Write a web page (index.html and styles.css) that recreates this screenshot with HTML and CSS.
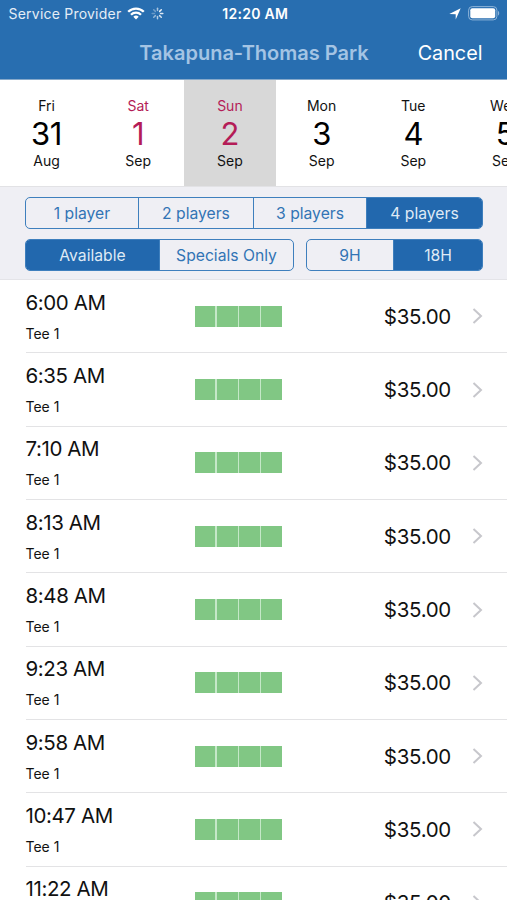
FILE: index.html
```html
<!DOCTYPE html>
<html lang="en">
<head>
<meta charset="utf-8">
<title>Tee times</title>
<link rel="stylesheet" href="styles.css">
</head>
<body>
<header class="top">
  <div class="status">
    <div class="status-left">
      <span class="carrier">Service Provider</span>
      <svg class="wifi" width="18" height="13" viewBox="0 0 18 13" fill="none" stroke="#fff" stroke-width="2.3"><path d="M1.2 4.8a11 11 0 0 1 15.6 0M4 7.8a7 7 0 0 1 10 0"/><path d="M6.3 9.7a3.9 3.9 0 0 1 5.400 0L9 12.500z" fill="#fff" stroke="none"/></svg>
      <svg class="spinner" width="13" height="13" viewBox="-6.5 -6.5 13 13" stroke="#fff" stroke-width="1.5" stroke-linecap="round"><path d="M0-3V-5.3" opacity=".6"/><path d="M2.1-2.1 3.800-3.800" opacity=".9"/><path d="M3 0H5.300" opacity=".85"/><path d="M2.100 2.100 3.800 3.800" opacity=".8"/><path d="M0 3V5.300" opacity=".65"/><path d="M-2.100 2.100-3.800 3.800" opacity=".5"/><path d="M-3 0H-5.300" opacity=".3"/><path d="M-2.100-2.100-3.800-3.800" opacity=".35"/></svg>
    </div>
    <span class="clock">12:20 AM</span>
    <div class="status-right">
      <svg width="12" height="12" viewBox="0 0 12 12"><path d="M11.700.3 6.700 11.600V6.200L.3 6z" fill="#fff"/></svg>
      <svg width="32" height="15" viewBox="0 0 32 15"><rect x=".6" y=".6" width="28.300" height="13.300" rx="3.600" fill="none" stroke="#8db3d8" stroke-width="1"/><rect x="2.300" y="2.300" width="24.900" height="9.900" rx="2" fill="#fff"/><path d="M30 5v4.500c1.600-.6 1.600-3.900 0-4.500" fill="#8db3d8"/></svg>
    </div>
  </div>
  <div class="nav"><span></span><h1>Takapuna-Thomas Park</h1><a class="cancel">Cancel</a></div>
</header>
<div class="days">
  <div class="day"><span>Fri</span><b>31</b><span>Aug</span></div>
  <div class="day weekend"><span>Sat</span><b>1</b><span>Sep</span></div>
  <div class="day weekend selected"><span>Sun</span><b>2</b><span>Sep</span></div>
  <div class="day"><span>Mon</span><b>3</b><span>Sep</span></div>
  <div class="day"><span>Tue</span><b>4</b><span>Sep</span></div>
  <div class="day"><span>Wed</span><b>5</b><span>Sep</span></div>
</div>
<div class="filters">
  <div class="segments players"><span>1 player</span><span>2 players</span><span>3 players</span><span class="on">4 players</span></div>
  <div class="filter-row">
    <div class="segments kind"><span class="on">Available</span><span>Specials Only</span></div>
    <div class="segments holes"><span>9H</span><span class="on">18H</span></div>
  </div>
</div>
<main class="list" id="list"></main>
<script src="app.js"></script>
</body>
</html>
```
FILE: styles.css
```css
* { box-sizing: border-box; }
body { margin: 0; width: 507px; height: 900px; overflow: hidden; background: #fff; color: #111; font-family: Inter, "Liberation Sans", sans-serif; white-space: nowrap; }
.top { height: 79px; background: #286eb0; color: #fff; }
.status { display: grid; grid-template-columns: 1fr auto 1fr; align-items: center; height: 27px; padding: 0 7px 0 8.5px; }
.status-left { display: flex; align-items: center; }
.carrier { font-size: 14px; letter-spacing: .22px; color: #e4edf6; }
.wifi { margin-left: 6px; }
.spinner { margin-left: 6px; }
.clock { font-size: 14px; font-weight: 600; letter-spacing: .3px; margin-left: 2px; }
.status-right { display: flex; align-items: center; justify-content: flex-end; gap: 7px; }
.nav { display: grid; grid-template-columns: 1fr auto 1fr; align-items: center; height: 52px; padding: 0 24px 0 25px; }
.nav h1 { margin: 0; font-size: 20px; font-weight: 600; color: #a4c4e4; }
.cancel { justify-self: end; font-size: 19.8px; margin-right: .5px; }
.days { display: flex; height: 108px; padding-left: .7px; border-top: 1px solid #87a9ca; border-bottom: 1px solid #e2e2e5; overflow: hidden; }
.day { flex: 0 0 91.7px; display: flex; flex-direction: column; align-items: center; padding-top: 17px; font-size: 14px; line-height: 18px; }
.day b { font-size: 31px; font-weight: 400; line-height: 37px; letter-spacing: -.3px; color: #000; }
.weekend span:first-child, .weekend b { color: #b41c57; }
.selected { background: #d8d8d8; }
.filters { height: 93.2px; padding: 10px 24px 0 25px; background: #efeff4; border-bottom: 1px solid #e4e4e8; }
.segments { display: grid; height: 32px; border: 1px solid #3e7fbd; border-radius: 5px; overflow: hidden; color: #3274b5; font-size: 15.7px; }
.segments span { display: flex; align-items: center; justify-content: center; border-left: 1px solid #3e7fbd; }
.segments span:first-child { border-left: 0; }
.segments .on { background: #2268ae; color: #dfeaf5; }
.players { grid-template-columns: 112px 115px 113px 1fr; }
.filter-row { display: flex; justify-content: space-between; margin-top: 10px; }
.kind { width: 269px; grid-template-columns: 133px 1fr; }
.holes { width: 177px; grid-template-columns: 86px 1fr; }
.list { padding-left: 25.5px; }
.row { display: grid; grid-template-columns: 169px 87.5px 1fr 11px; align-items: center; height: 73.3px; padding-right: 24px; border-bottom: 1px solid #e3e3e5; }
.when { display: flex; flex-direction: column; }
.time { font-size: 20.5px; line-height: 26px; letter-spacing: -.4px; }
.tee { font-size: 14px; line-height: 20px; margin-top: 8px; }
.row .when { padding-top: 1px; }
.slots { display: grid; grid-template-columns: repeat(4, 1fr); gap: 1.5px; height: 21px; background: #c5e8c8; }
.slots i { background: #81c784; }
.price { justify-self: end; margin-right: 21px; font-size: 20.5px; letter-spacing: -.3px; }
```
FILE: app.js
```js
const times = ["6:00", "6:35", "7:10", "8:13", "8:48", "9:23", "9:58", "10:47", "11:22"];
document.getElementById("list").innerHTML = times.map(t => `
  <div class="row">
    <div class="when"><span class="time">${t} AM</span><span class="tee">Tee 1</span></div>
    <div class="slots"><i></i><i></i><i></i><i></i></div>
    <span class="price">$35.00</span>
    <svg width="11" height="16" viewBox="0 0 11 16" fill="none" stroke="#c7c7cc" stroke-width="2"><path d="M1.5 1 9 8l-7.5 7"/></svg>
  </div>`).join("");
```
